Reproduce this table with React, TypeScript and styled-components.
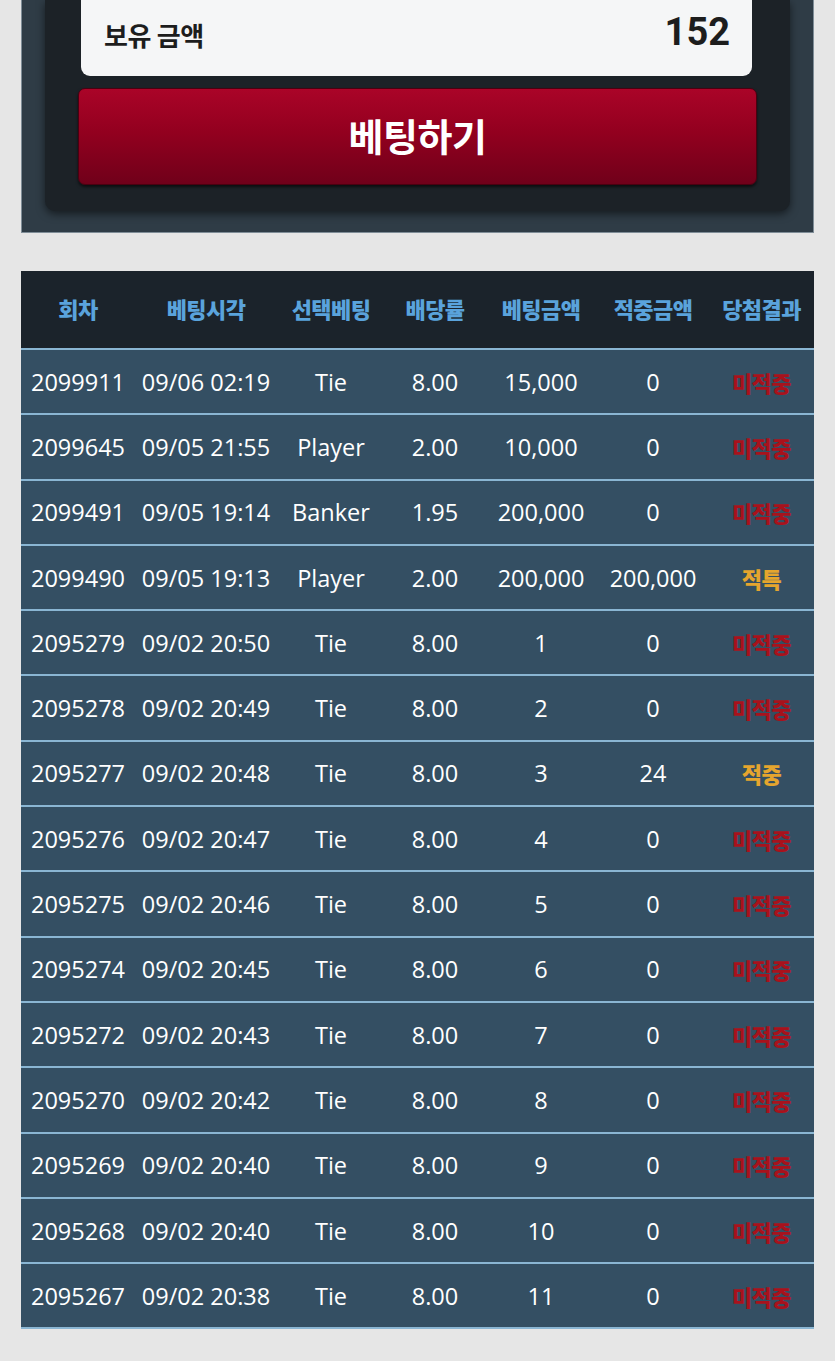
import React from "react";
import styled, { createGlobalStyle } from "styled-components";

const GlobalStyle = createGlobalStyle`
  html, body {
    margin: 0;
    padding: 0;
    background: #e6e6e6;
  }
  body {
    font-family: "Open Sans", "Noto Sans CJK KR", sans-serif;
  }
`;

const Page = styled.div`
  width: 835px;
  min-height: 1361px;
  background: #e6e6e6;
  padding: 0 21px 33px 21px;
  box-sizing: border-box;
  display: flex;
  flex-direction: column;
  gap: 38px;
`;

const BetPanel = styled.section`
  background: #2f3c46;
  border: 1px solid #7f8d97;
  border-top: none;
  padding: 0 23px 21px 23px;
  box-sizing: border-box;
`;

const BetInner = styled.div`
  background: #1c2227;
  border-radius: 0 0 10px 10px;
  box-shadow: 0 3px 8px rgba(0, 0, 0, 0.55);
  padding: 0 33px 26px 33px;
  display: flex;
  flex-direction: column;
  gap: 12px;
`;

const BalanceBox = styled.div`
  height: 76px;
  margin: 0 5px 0 3px;
  background: #f5f6f7;
  border-radius: 0 0 9px 9px;
  display: flex;
  align-items: center;
  justify-content: space-between;
  padding: 0 22px 12px 23px;
  box-sizing: border-box;
`;

const BalanceLabel = styled.span`
  font-family: "Roboto", "Noto Sans CJK KR", sans-serif;
  font-weight: 700;
  font-size: 26px;
  color: #1d1d1d;
  letter-spacing: -0.5px;
  margin-top: 5px;
`;

const BalanceValue = styled.span`
  font-family: "Roboto", "Noto Sans CJK KR", sans-serif;
  font-weight: 700;
  font-size: 38px;
  color: #1d1d1d;
`;

const BetButton = styled.button`
  height: 97px;
  width: 100%;
  border: 1px solid #4a0010;
  border-radius: 7px;
  background: linear-gradient(180deg, #aa0428 0%, #93001f 45%, #70001a 100%);
  box-shadow: 0 2px 3px rgba(0, 0, 0, 0.6);
  color: #ffffff;
  font-family: "Noto Sans CJK KR", sans-serif;
  font-weight: 700;
  font-size: 38px;
  letter-spacing: -0.5px;
  display: flex;
  align-items: center;
  justify-content: center;
  padding: 0 0 4px 0;
  cursor: pointer;
`;

const Table = styled.div`
  display: flex;
  flex-direction: column;
  background: #344f63;
`;

const cols = "114px 142px 108px 100px 112px 112px 105px";

const HeaderRow = styled.div`
  display: grid;
  grid-template-columns: ${cols};
  height: 77px;
  background: #1b232b;
  border-bottom: 2px solid #8ab6d3;
  align-items: center;
`;

const HeaderCell = styled.div`
  text-align: center;
  font-family: "Noto Sans CJK KR", sans-serif;
  font-weight: 900;
  font-size: 22px;
  color: #5aa3dc;
  letter-spacing: -0.6px;
  padding-bottom: 4px;
  white-space: nowrap;
`;

const Row = styled.div`
  display: grid;
  grid-template-columns: ${cols};
  height: 63.3px;
  border-bottom: 2px solid #8ab6d3;
  align-items: center;
`;

const Cell = styled.div`
  text-align: center;
  font-family: "Open Sans", "Noto Sans CJK KR", sans-serif;
  font-size: 23.5px;
  color: #ffffff;
  white-space: nowrap;
`;

const ResultCell = styled.div<{ $win: boolean }>`
  text-align: center;
  font-family: "Noto Sans CJK KR", sans-serif;
  font-weight: 900;
  font-size: 22px;
  letter-spacing: -0.5px;
  color: ${(p) => (p.$win ? "#e5a52e" : "#a8121c")};
`;

type Bet = {
  id: string;
  time: string;
  pick: string;
  odds: string;
  amount: string;
  hit: string;
  result: string;
};

const rows: Bet[] = [
  { id: "2099911", time: "09/06 02:19", pick: "Tie", odds: "8.00", amount: "15,000", hit: "0", result: "미적중" },
  { id: "2099645", time: "09/05 21:55", pick: "Player", odds: "2.00", amount: "10,000", hit: "0", result: "미적중" },
  { id: "2099491", time: "09/05 19:14", pick: "Banker", odds: "1.95", amount: "200,000", hit: "0", result: "미적중" },
  { id: "2099490", time: "09/05 19:13", pick: "Player", odds: "2.00", amount: "200,000", hit: "200,000", result: "적특" },
  { id: "2095279", time: "09/02 20:50", pick: "Tie", odds: "8.00", amount: "1", hit: "0", result: "미적중" },
  { id: "2095278", time: "09/02 20:49", pick: "Tie", odds: "8.00", amount: "2", hit: "0", result: "미적중" },
  { id: "2095277", time: "09/02 20:48", pick: "Tie", odds: "8.00", amount: "3", hit: "24", result: "적중" },
  { id: "2095276", time: "09/02 20:47", pick: "Tie", odds: "8.00", amount: "4", hit: "0", result: "미적중" },
  { id: "2095275", time: "09/02 20:46", pick: "Tie", odds: "8.00", amount: "5", hit: "0", result: "미적중" },
  { id: "2095274", time: "09/02 20:45", pick: "Tie", odds: "8.00", amount: "6", hit: "0", result: "미적중" },
  { id: "2095272", time: "09/02 20:43", pick: "Tie", odds: "8.00", amount: "7", hit: "0", result: "미적중" },
  { id: "2095270", time: "09/02 20:42", pick: "Tie", odds: "8.00", amount: "8", hit: "0", result: "미적중" },
  { id: "2095269", time: "09/02 20:40", pick: "Tie", odds: "8.00", amount: "9", hit: "0", result: "미적중" },
  { id: "2095268", time: "09/02 20:40", pick: "Tie", odds: "8.00", amount: "10", hit: "0", result: "미적중" },
  { id: "2095267", time: "09/02 20:38", pick: "Tie", odds: "8.00", amount: "11", hit: "0", result: "미적중" },
];

const headers = ["회차", "베팅시각", "선택베팅", "배당률", "베팅금액", "적중금액", "당첨결과"];

export default function App() {
  return (
    <>
      <GlobalStyle />
      <Page>
        <BetPanel>
          <BetInner>
            <BalanceBox>
              <BalanceLabel>보유 금액</BalanceLabel>
              <BalanceValue>152</BalanceValue>
            </BalanceBox>
            <BetButton>베팅하기</BetButton>
          </BetInner>
        </BetPanel>
        <Table>
          <HeaderRow>
            {headers.map((h) => (
              <HeaderCell key={h}>{h}</HeaderCell>
            ))}
          </HeaderRow>
          {rows.map((r) => (
            <Row key={r.id}>
              <Cell>{r.id}</Cell>
              <Cell>{r.time}</Cell>
              <Cell>{r.pick}</Cell>
              <Cell>{r.odds}</Cell>
              <Cell>{r.amount}</Cell>
              <Cell>{r.hit}</Cell>
              <ResultCell $win={r.result !== "미적중"}>{r.result}</ResultCell>
            </Row>
          ))}
        </Table>
      </Page>
    </>
  );
}
